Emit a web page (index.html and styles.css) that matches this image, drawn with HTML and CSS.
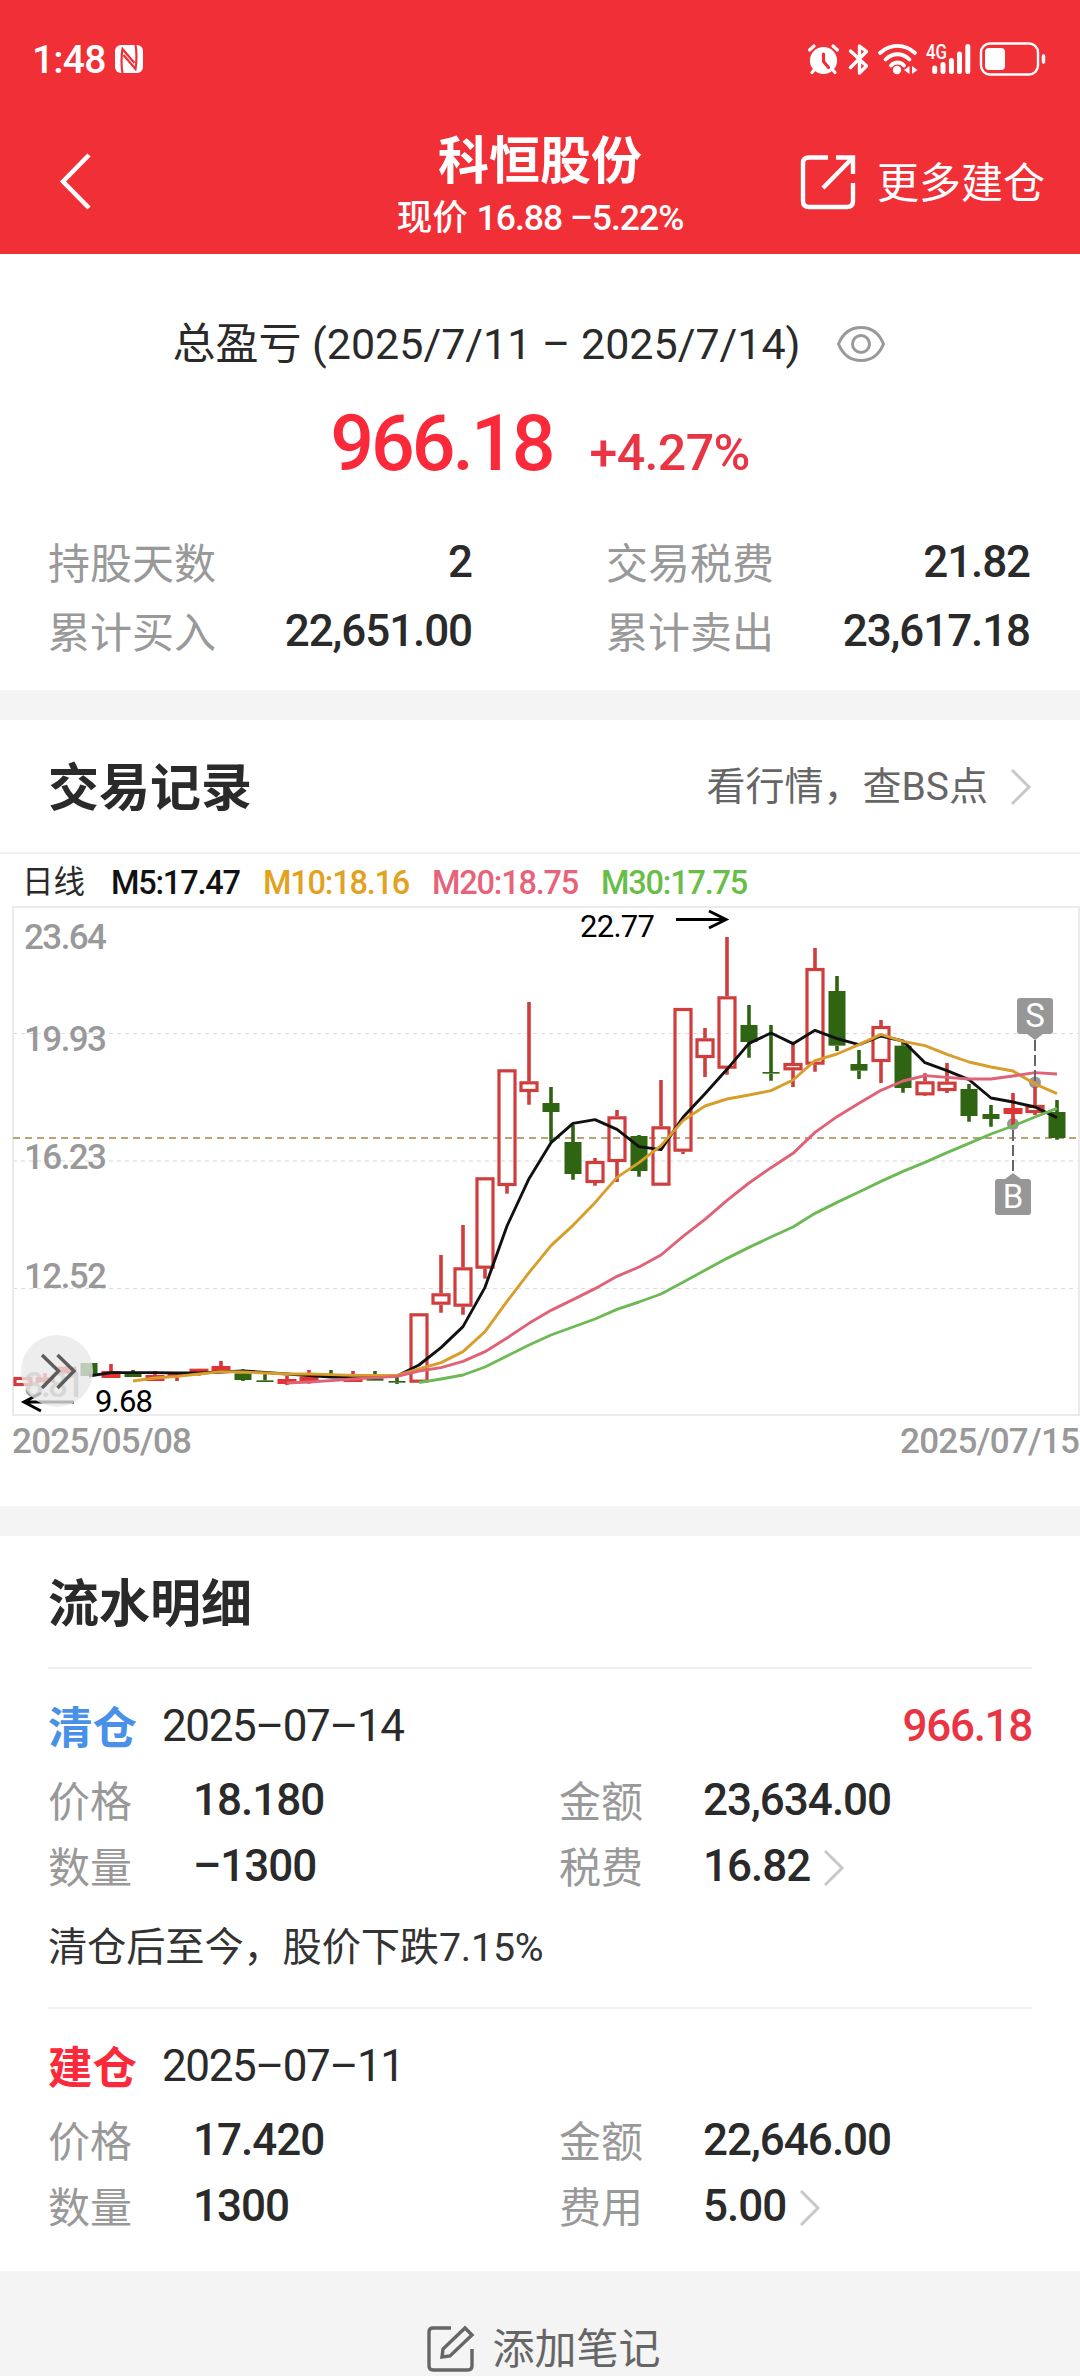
FILE: index.html
```html
<!DOCTYPE html>
<html lang="zh-CN">
<head>
<meta charset="utf-8">
<title>科恒股份</title>
<link rel="stylesheet" href="styles.css">
</head>
<body>
<header class="header">
  <div class="status">
    <span class="clock">1:48</span>
    <svg class="nfc" width="28" height="28" viewBox="0 0 28 28">
      <rect width="28" height="28" rx="6" fill="#fff"/>
      <g fill="none" stroke="#f12f37" stroke-width="2.200"><path d="M7.500 28C6 21 6.500 9 7.500 4L19.500 18"/><path d="M20.500 0C22 7 21.500 19 20.500 24L8.500 10"/></g>
    </svg>
    <svg class="status-icons" width="240" height="36" viewBox="806 41 240 36" fill="none" stroke="#fff" stroke-linecap="round">
      <circle cx="823.500" cy="60.500" r="13.600" fill="#fff" stroke="none"/>
      <path d="M809.500 50L814 46M837.500 50L833 46M815 69L812 72.500M832 69L835 72.500" stroke-width="3.200"/>
      <path d="M823.500 54V61.500L828.500 67.500" stroke="#f12f37" stroke-width="3.200"/>
      <path d="M850.500 51L866.500 66L859.500 73V63M859.500 56V46L866.500 51.500L850.500 67.500" stroke-width="3.400" stroke-linejoin="round"/>
      <path d="M880 53C890 43.500 905 43.500 915 53M885.500 59.500C892.500 52.500 902.500 52.500 909.500 59.500M891 65.500C894.500 61.500 900.500 61.500 904 65.500" stroke-width="3.800"/>
      <circle cx="897" cy="70" r="4.200" fill="#fff" stroke="none"/>
      <path d="M909.500 66V74L904 70ZM912 66L917.500 70L912 74Z" fill="#fff" stroke="none"/>
      <path d="M934.700 68V71.500M943 64.500V71.500M951.400 60.500V71.500M959.500 54V71.500M967.800 46.500V71.500" stroke-width="5"/>
      <rect x="981" y="43.500" width="57" height="31" rx="9" stroke-width="2.400"/>
      <rect x="985" y="48" width="20" height="22" rx="4" fill="#fff" stroke="none"/>
      <path d="M1043.500 56V62" stroke-width="3.500"/>
      <text class="net" x="926" y="59" textLength="21" lengthAdjust="spacingAndGlyphs">4G</text>
    </svg>
  </div>
  <div class="nav">
    <svg class="back" width="34" height="60" viewBox="0 0 34 60" fill="none" stroke="#fff" stroke-width="4.500"><path d="M31 4L5 30.500L31 57"/></svg>
    <div class="title">
      <h1>科恒股份</h1>
      <p>现价 <span>16.88 –5.22%</span></p>
    </div>
    <div class="more">
      <svg width="56" height="56" viewBox="0 0 56 56" fill="none" stroke="#fff" stroke-width="4.400"><path d="M28 3.500H9Q3 3.500 3 9V47Q3 53 9 53H47Q53 53 53 47V29M36 3.500H53V20M53 3.500L23 34"/></svg>
      <span>更多建仓</span>
    </div>
  </div>
</header>

<section class="summary">
  <div class="range">
    <span>总盈亏 (2025/7/11 – 2025/7/14)</span>
    <svg width="50" height="38" viewBox="0 0 50 38" fill="none" stroke="#999" stroke-width="3"><path d="M2.500 19C7 8 15 2.500 25 2.500S43 8 47.500 19C43 30 35 35.500 25 35.500S7 30 2.500 19Z"/><circle cx="25" cy="19" r="8.500"/></svg>
  </div>
  <div class="profit"><b>966.18</b><span>+4.27%</span></div>
  <dl class="totals">
    <div><dt>持股天数</dt><dd>2</dd></div>
    <div><dt>交易税费</dt><dd>21.82</dd></div>
    <div><dt>累计买入</dt><dd>22,651.00</dd></div>
    <div><dt>累计卖出</dt><dd>23,617.18</dd></div>
  </dl>
</section>

<section class="records">
  <div class="section-head">
    <h2>交易记录</h2>
    <div class="link"><span>看行情，查BS点</span><svg width="22" height="38" viewBox="0 0 22 38" class="arrow"><path d="M2 2L19 19L2 36"/></svg></div>
  </div>
  <div class="legend">
    <span class="day">日线</span><span class="m5">M5:17.47</span><span class="m10">M10:18.16</span><span class="m20">M20:18.75</span><span class="m30">M30:17.75</span>
  </div>
  <svg class="chart" width="1080" height="570" viewBox="0 900 1080 570">
    <g fill="none" stroke="#dcdcdc" stroke-dasharray="4 4"><path d="M13 1033.500H1079M13 1288.500H1079"/><path d="M13 1161H1079" stroke="#ebebeb" stroke-width="2"/></g>
    <rect x="13" y="907" width="1066" height="508" fill="none" stroke="#ebebeb" stroke-width="2"/>
    <g class="axis">
      <text x="24" y="949" textLength="83">23.64</text>
      <text x="24" y="1051" textLength="83">19.93</text>
      <text x="24" y="1169" textLength="83">16.23</text>
      <text x="24" y="1288" textLength="83">12.52</text>
      <text x="24" y="1397" textLength="61">8.81</text>
      <text x="12" y="1453" textLength="180">2025/05/08</text>
      <text x="900" y="1453" textLength="180">2025/07/15</text>
    </g>
    <path d="M13 1138H1079" stroke="#b8a475" stroke-width="2" stroke-dasharray="7 5"/>
    <g fill="#979797"><circle cx="1035" cy="1082.500" r="6"/><circle cx="1013" cy="1124" r="6"/></g>
    <g id="candles"></g>
    <g id="averages" fill="none" stroke-width="2.900" stroke-linejoin="round"></g>
    <g stroke="#666" stroke-width="2" stroke-dasharray="11 4"><path d="M1035 1040V1082"/><path d="M1013 1130V1173"/></g>
    <g fill="#979797"><rect x="1017" y="998" width="36" height="36" rx="3"/><path d="M1027 1034L1035 1040L1043 1034Z"/><rect x="995" y="1179" width="36" height="36" rx="3"/><path d="M1005 1179L1013 1173L1021 1179Z"/></g>
    <g class="tag"><text x="1035" y="1027">S</text><text x="1013" y="1208">B</text></g>
    <g fill="none" stroke="#000" stroke-width="3"><path d="M676 919.500H726M709 911L726 919.500L709 928"/><path d="M74 1402H24M41 1393L24 1402L41 1411"/></g>
    <g class="extreme"><text x="580" y="937" textLength="75">22.77</text><text x="95" y="1412" textLength="58">9.68</text></g>
    <circle cx="57" cy="1371" r="36" fill="#e8e8e8" fill-opacity=".78"/>
    <path d="M42 1355L58.500 1371L42 1388M57.500 1355L74 1371L57.500 1388" fill="none" stroke="#5c5c5c" stroke-width="3.400"/>
  </svg>
</section>

<section class="details">
  <div class="section-head"><h2>流水明细</h2></div>
  <article class="entry">
    <div class="entry-head"><strong class="sell">清仓</strong><span>2025–07–14</span><em>966.18</em></div>
    <dl>
      <dt>价格</dt><dd>18.180</dd><dt>金额</dt><dd>23,634.00</dd>
      <dt>数量</dt><dd>–1300</dd><dt>税费</dt><dd>16.82<svg width="22" height="38" viewBox="0 0 22 38" class="arrow"><path d="M2 2L19 19L2 36"/></svg></dd>
    </dl>
    <p class="remark">清仓后至今，股价下跌7.15%</p>
  </article>
  <article class="entry">
    <div class="entry-head"><strong class="buy">建仓</strong><span>2025–07–11</span></div>
    <dl>
      <dt>价格</dt><dd>17.420</dd><dt>金额</dt><dd>22,646.00</dd>
      <dt>数量</dt><dd>1300</dd><dt>费用</dt><dd>5.00<svg width="22" height="38" viewBox="0 0 22 38" class="arrow"><path d="M2 2L19 19L2 36"/></svg></dd>
    </dl>
  </article>
</section>

<footer class="note">
  <svg width="48" height="48" viewBox="0 0 48 48" fill="none" stroke="#666" stroke-width="3.400"><path d="M24 3H6Q2 3 2 7V41Q2 45 6 45H41Q45 45 45 41V24M15 32L16 24L38 3L45 10L23 31Z"/></svg>
  <span>添加笔记</span>
</footer>
<script src="chart.js"></script>
</body>
</html>
```
FILE: styles.css
```css
* { box-sizing: border-box; margin: 0; padding: 0; }
body {
  width: 1080px; height: 2376px; overflow: hidden;
  background: #fff; color: #2a2a2a;
  font-family: Roboto, "Noto Sans CJK SC", sans-serif;
}
svg { display: block; flex: none; }
h1, h2, strong { font-weight: 700; }

.header { height: 254px; background: #f12f37; color: #fff; }
.status { display: flex; align-items: flex-start; height: 120px; padding: 41px 34px 0 32px; }
.clock { width: 83px; font-size: 39px; font-weight: 500; line-height: 39px; letter-spacing: -.8px; }
.nfc { margin-top: 4px; }
.status-icons { margin-left: auto; }
.net { font-size: 21px; font-weight: 500; fill: #fff; stroke: none; }
.nav { display: grid; grid-template-columns: 340px 400px 340px; }
.back { margin: 31px 0 0 58px; }
.title { text-align: center; white-space: nowrap; }
.title h1 { margin-top: 12px; font-size: 51px; line-height: 60px; }
.title p { margin-top: 6px; font-size: 35.5px; font-weight: 500; line-height: 40px; }
.title p span { letter-spacing: -1px; }
.more { display: flex; justify-content: flex-end; gap: 21px; padding: 34px 35px 0 0; font-size: 42px; line-height: 60px; }

.summary { height: 436px; padding-top: 60px; }
.range { display: flex; justify-content: center; align-items: center; gap: 35px; height: 60px; margin-right: 22px; }
.range span { font-size: 43px; letter-spacing: 0; line-height: 60px; white-space: nowrap; }
.profit { display: flex; justify-content: center; align-items: baseline; gap: 37px; height: 90px; margin-top: 25px; color: #fa2a3b; line-height: 90px; }
.profit b { font-size: 77px; font-weight: 500; letter-spacing: -3px; }
.profit span { font-size: 50px; font-weight: 500; letter-spacing: -.6px; color: #e93443; }
.totals { display: grid; grid-template-columns: 424px 424px; column-gap: 134px; margin: 43px 48px 0; }
.totals div { display: flex; justify-content: space-between; height: 69px; }
dt { padding-top: 3px; font-size: 42px; color: #999; line-height: 60px; }
dd { display: flex; font-size: 44px; font-weight: 500; line-height: 60px; letter-spacing: -1px; }
.totals dd { letter-spacing: -1.1px; }

.records { height: 816px; border-top: 30px solid #f4f4f4; }
.section-head { display: flex; justify-content: space-between; align-items: center; height: 132px; padding: 5px 48px 0; }
.section-head h2 { font-size: 51px; line-height: 60px; }
.link { display: flex; align-items: center; gap: 22px; margin-top: -3px; font-size: 39px; color: #666; line-height: 60px; }
.arrow { fill: none; stroke: #c8c8c8; stroke-width: 3; }
.legend { display: flex; align-items: center; height: 48px; padding: 11px 0 0 22px; border-top: 2px solid #efefef; font-size: 32.5px; line-height: 36px; white-space: nowrap; }
.legend span { width: 169px; font-weight: 500; letter-spacing: -1.2px; }
.legend .day { width: 89px; font-size: 31.5px; font-weight: 400; letter-spacing: 0; }
.legend .m5 { width: 152px; color: #111; }
.legend .m10 { color: #e2a11e; }
.legend .m20 { color: #e6637a; }
.legend .m30 { color: #69bd49; }
.axis { font-size: 35px; font-weight: 500; fill: #999; }
.extreme { font-size: 31px; }
.tag { font-size: 33px; fill: #fff; text-anchor: middle; }

.details { height: 765px; border-top: 30px solid #f4f4f4; }
.details .section-head { height: 131px; padding-top: 6px; }
.entry { height: 340px; margin: 0 48px; padding-top: 27px; border-top: 2px solid #efefef; }
.entry-head { display: flex; height: 74px; font-size: 44px; line-height: 60px; }
.entry-head strong { width: 114px; padding-top: 3px; font-size: 44.5px; }
.entry-head span { letter-spacing: -1.4px; }
.entry-head em { margin-left: auto; font-style: normal; font-weight: 500; letter-spacing: -1.3px; color: #e93443; }
.sell { color: #4991e8; }
.buy { color: #fa2a3b; }
.entry dl { display: grid; grid-template-columns: 145px 366px 144px 1fr; grid-auto-rows: 66px; }
.entry .arrow { margin: 13px 0 0 13px; }
.remark { margin-top: 16px; font-size: 39.3px; line-height: 60px; color: #333; letter-spacing: -.2px; }

.note { display: flex; justify-content: center; gap: 17px; height: 105px; padding: 54px 0 0 8px; background: #f4f4f4; color: #666; font-size: 42px; line-height: 50px; }
```
FILE: chart.js
```js
// Vertical values are thirds of a pixel below y = 880; columns are 22px apart.
const py = v => 880 + v / 3;
const X0 = 23, STEP = 22;

// [kind, high, body top, body bottom, low]; r = hollow rise, s = solid rise, g = fall
const candles = [
  ['r',1491,1491,1518,1518],['s',1480,1492,1507,1520],['s',1458,1460,1480,1482],['g',1449,1449,1488,1488],
  ['s',1452,1473,1494,1494],['g',1470,1480,1491,1491],['s',1473,1485,1503,1503],['s',1480,1480,1488,1503],
  ['s',1466,1466,1478,1487],['s',1443,1458,1474,1480],['g',1468,1480,1500,1503],['g',1480,1501,1506,1506],
  ['s',1488,1497,1512,1515],['s',1470,1490,1507,1511],['g',1470,1485,1493,1493],['s',1473,1490,1506,1506],
  ['g',1473,1495,1502,1502],['g',1490,1503,1508,1512],
  ['r',1300,1300,1508,1508],['r',1125,1240,1274,1298],['r',1035,1162,1280,1304],['r',892,892,1166,1196],
  ['r',568,568,918,941],['r',366,604,636,674],['g',621,669,696,785],['g',735,786,882,899],
  ['r',834,843,909,917],['r',690,709,846,906],['g',765,768,873,890],['r',600,739,917,917],
  ['r',384,384,815,822],['r',444,475,534,591],['r',171,349,566,584],['g',375,435,486,533],
  ['g',435,576,581,602],['r',485,549,571,621],['r',204,264,554,575],['g',288,333,497,513],
  ['g',510,552,572,597],['r',420,438,546,609],['g',483,497,624,638],['r',580,604,646,648],
  ['r',549,605,633,639],['g',612,627,708,725],['g',675,702,717,740],['s',639,684,702,735],
  ['r',620,675,699,705],['g',660,696,774,779]
];

const averages = [
  ['#111', 3, [1488,1478,1478,1478,1479,1479,1476,1473,1477,1482,1487,1491,1491,1490,1488,1455,1403,1340,1222,1038,896,788,730,719,748,800,809,712,641,568,490,459,491,451,476,494,468,483,548,572,599,654,666,681,713]],
  ['#d99d2b', 5, [1503,1494,1489,1482,1475,1476,1479,1482,1482,1484,1486,1486,1486,1467,1448,1415,1355,1264,1178,1097,1036,968,892,848,797,722,678,657,645,632,600,542,522,494,463,484,497,523,546,561,573,612,641]],
  ['#df6277', 12, [1509,1506,1502,1497,1493,1489,1473,1463,1444,1415,1374,1330,1291,1259,1226,1189,1161,1125,1069,1018,961,909,863,820,757,710,670,631,603,587,592,597,597,588,578,582]],
  ['#6db955', 18, [1508,1497,1485,1461,1428,1395,1365,1341,1317,1288,1266,1242,1207,1171,1135,1102,1071,1041,1000,967,936,904,874,847,818,790,762,738,711,685]]
];

document.getElementById('candles').innerHTML = candles.map(([kind, hi, top, bot, lo], i) => {
  const x = X0 + STEP * i;
  const color = kind === 'g' ? '#2f6512' : kind === 's' ? '#df3434' : '#cf3e3d';
  const wicks = `<path d="M${x} ${py(hi)}V${py(top)}M${x} ${py(bot)}V${py(lo)}" stroke="${color}" stroke-width="3.6"/>`;
  const body = kind === 'r'
    ? `<rect x="${x - 8}" y="${py(top) + 1.5}" width="16" height="${(bot - top) / 3 - 3}" fill="none" stroke="${color}" stroke-width="3.2"/>`
    : `<rect x="${x - (kind === 'g' ? 8.5 : 9.5)}" y="${py(top)}" width="${kind === 'g' ? 17 : 19}" height="${(bot - top) / 3}" fill="${color}"/>`;
  return wicks + body;
}).join('');

document.getElementById('averages').innerHTML = averages.map(([color, start, values]) =>
  `<polyline stroke="${color}" points="${values.map((v, i) => `${X0 + STEP * (start + i)},${py(v)}`).join(' ')}"/>`
).join('');
```
